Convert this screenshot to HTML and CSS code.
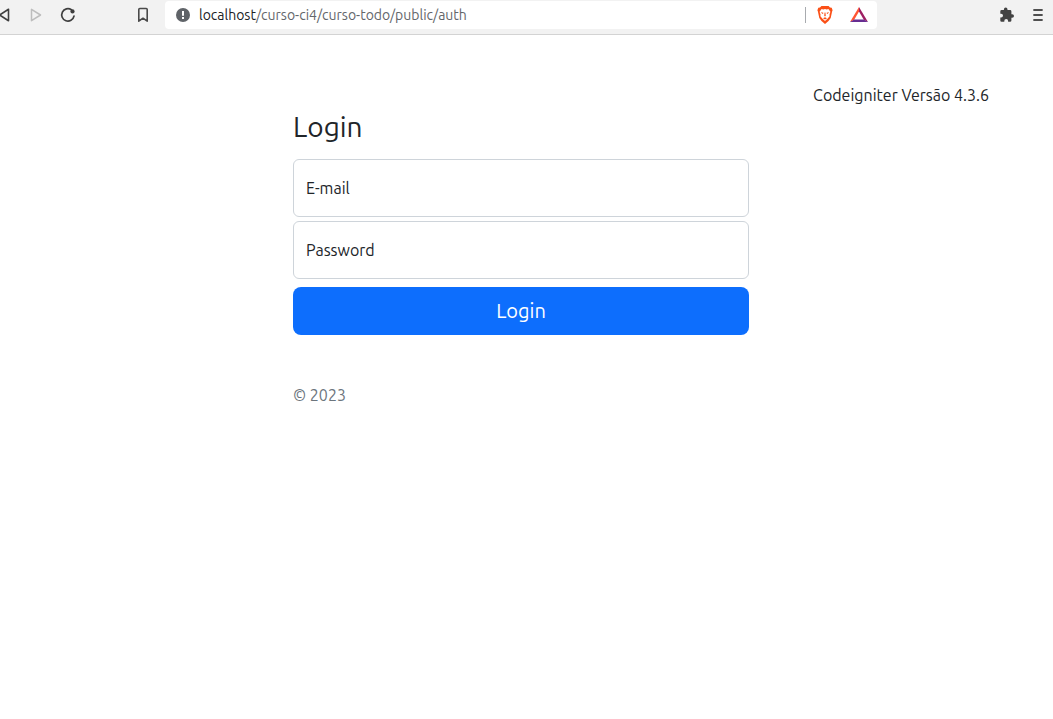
FILE: index.html
```html
<!DOCTYPE html>
<html lang="pt-BR">
<head>
    <meta charset="UTF-8">
    <meta name="viewport" content="width=device-width, initial-scale=1.0">
    <title>Login</title>
    <link rel="stylesheet" href="styles.css">
</head>
<body>
    <header class="toolbar">
        <button class="icon-button" type="button" aria-label="Back">
            <svg width="16" height="16" viewBox="0 0 16 16" fill="none" stroke="#3f3f3f" stroke-width="1.6" stroke-linejoin="round"><path d="M12.5 2.3v11.4L3.5 8z"/></svg>
        </button>
        <button class="icon-button" type="button" aria-label="Forward" disabled>
            <svg width="16" height="16" viewBox="0 0 16 16" fill="none" stroke="#bdbdbd" stroke-width="1.5" stroke-linejoin="round"><path d="M3.5 2.3v11.4l9-5.7z"/></svg>
        </button>
        <button class="icon-button" type="button" aria-label="Reload">
            <svg width="16" height="16" viewBox="0 0 16 16" fill="none"><path d="M11.4 2.8A6.2 6.2 0 1 0 14 9.2" stroke="#3f3f3f" stroke-width="1.7" stroke-linecap="round"/><circle cx="12.5" cy="4.4" r="2.1" fill="#3f3f3f"/></svg>
        </button>
        <button class="icon-button bookmark" type="button" aria-label="Bookmark">
            <svg width="16" height="16" viewBox="0 0 16 16" fill="none" stroke="#4a4a4a" stroke-width="1.6" stroke-linejoin="round"><path d="M3.8 2.5q0-1 1-1h6.4q1 0 1 1v11.7L8 11.2l-4.2 3z"/></svg>
        </button>

        <div class="address">
            <svg width="14" height="14" viewBox="0 0 14 14"><circle cx="7" cy="7" r="7" fill="#5f6368"/><path d="M7 3v4.8" stroke="#fff" stroke-width="2"/><path d="M7 9v2" stroke="#fff" stroke-width="2"/></svg>
            <a class="url" href="#"><span class="host">localhost</span>/curso-ci4/curso-todo/public/auth</a>
            <span class="divider"></span>
            <button class="icon-button" type="button" aria-label="Shields">
                <svg width="18" height="20" viewBox="0 0 18 20"><path d="M5.4 1h7.2l1.4 1.6 1.7.1.9 2.5-.5 1.2-1.4 6.6-2.2 2.9L9 18.9l-3.5-3-2.2-2.9-1.4-6.6-.5-1.2.9-2.5L4 2.6z" fill="#fb5017"/><path d="M5.6 4.1l1.7.4L9 4.1l1.7.4 1.7-.4 2 2.7-.9 2.6.1 1.9-1.9 2.2-2.7 2.4-2.7-2.4-1.9-2.2.1-1.9-.9-2.6z" fill="#fff"/><path d="M5.1 7l2.6.9-1.5 1zM12.9 7l-2.6.9 1.5 1zM8.6 7.5h.8l.4 3.3-.8.8-.8-.8zM7 13.3l2-1 2 1-2 1.2z" fill="#fb5017"/></svg>
            </button>
            <button class="icon-button" type="button" aria-label="Rewards">
                <svg width="18" height="18" viewBox="0 0 18 18"><path d="M9 1L0 16l4.2-2.3L9 5.4z" fill="#ff5533"/><path d="M9 1l9 15-4.2-2.3L9 5.4z" fill="#9e1f63"/><path d="M0 16h18l-4.2-2.5H4.2z" fill="#662d91"/></svg>
            </button>
        </div>

        <button class="icon-button extensions" type="button" aria-label="Extensions">
            <svg width="16" height="16" viewBox="0 0 16 16" fill="#424242"><path d="M13.2 7.2h-.8V4.5q0-1.4-1.4-1.4H8.5v-.7a1.8 1.8 0 0 0-3.6 0v.7H2.6q-1.3 0-1.3 1.4v2.2h.8a1.9 1.9 0 0 1 0 3.8h-.8v2.9q0 1.3 1.3 1.3h2.7v-.8a1.9 1.9 0 0 1 3.8 0v.8H11q1.4 0 1.4-1.3v-2.6h.8a1.8 1.8 0 0 0 0-3.6z"/></svg>
        </button>
        <button class="icon-button menu" type="button" aria-label="Menu">
            <svg width="16" height="16" viewBox="0 0 16 16" stroke="#4f4f4f" stroke-width="1.8" stroke-linecap="round"><path d="M4 3h8M4 8h8M4 13h8"/></svg>
        </button>
    </header>

    <main class="page">
        <div class="container">
            <p class="version">Codeigniter Versão 4.3.6</p>

            <form class="login-form">
                <h1>Login</h1>
                <div class="form-floating">
                    <input type="email" id="email" name="email">
                    <label for="email">E-mail</label>
                </div>
                <div class="form-floating">
                    <input type="password" id="password" name="password">
                    <label for="password">Password</label>
                </div>
                <button class="btn-login" type="submit">Login</button>
                <p class="copyright">© 2023</p>
            </form>
        </div>
    </main>
</body>
</html>
```

FILE: styles.css
```css
* {
    box-sizing: border-box;
}
body {
    margin: 0;
    font-family: Ubuntu, "Noto Sans", sans-serif;
    font-size: 16px;
    line-height: 24px;
    color: #212529;
    background-color: #fff;
}
button,
input {
    font-family: inherit;
}

/* Browser bar */
.toolbar {
    display: flex;
    align-items: center;
    padding: 1px 0 5px;
    overflow: hidden;
    background-color: #f2f2f2;
    border-bottom: 1px solid #d3d3d3;
}
.icon-button {
    display: flex;
    flex: none;
    align-items: center;
    justify-content: center;
    width: 32px;
    height: 28px;
    padding: 0;
    border: none;
    background: none;
    cursor: pointer;
}
.toolbar > .icon-button:first-child {
    margin-left: -12px;
}
.bookmark {
    margin: 0 6px 0 43px;
}
.extensions {
    margin-left: 114px;
}
.menu {
    width: 30px;
}
.address {
    display: flex;
    flex: 1;
    align-items: center;
    min-width: 0;
    padding: 0 2px 0 11px;
    background-color: #fff;
    border-radius: 4px;
}
.address > svg {
    flex: none;
}
.address .icon-button + .icon-button {
    margin-left: 2px;
}
.url {
    flex: 1;
    margin-left: 9px;
    overflow: hidden;
    font-size: 14px;
    white-space: nowrap;
    color: #63666a;
    text-decoration: none;
}
.host {
    color: #202124;
}
.divider {
    width: 1px;
    height: 16px;
    margin-right: 3px;
    background-color: #a8abaf;
}

/* Login page */
.page {
    padding: 48px 11px 48px 0;
}
.container {
    max-width: 960px;
    margin: 0 auto;
    padding: 0 12px;
}
.version {
    margin: 0;
    text-align: right;
}
.login-form {
    width: calc(50% - 12px);
    margin: 0 auto;
}
.login-form h1 {
    margin: 0 0 12px;
    font-size: 28px;
    font-weight: 400;
    line-height: 40px;
}
.form-floating {
    display: grid;
    margin-bottom: 4px;
}
.form-floating input,
.form-floating label {
    grid-area: 1 / 1;
}
.form-floating input {
    width: 100%;
    height: 58px;
    padding: 16px 12px;
    font-size: 16px;
    color: #212529;
    background-color: #fff;
    border: 1px solid #ced4da;
    border-radius: 6px;
}
.form-floating label {
    align-self: center;
    padding: 0 13px;
    pointer-events: none;
}
.form-floating input:focus {
    border-color: #86b7fe;
    outline: none;
}
.form-floating input:focus + label {
    visibility: hidden;
}
.btn-login {
    display: block;
    width: 100%;
    margin-top: 8px;
    padding: 9px 16px;
    font-size: 20px;
    line-height: 30px;
    color: #fff;
    background-color: #0d6efd;
    border: none;
    border-radius: 8px;
    cursor: pointer;
}
.btn-login:hover {
    background-color: #0b5ed7;
}
.copyright {
    margin: 48px 0 16px;
    color: #6c757d;
}
```
